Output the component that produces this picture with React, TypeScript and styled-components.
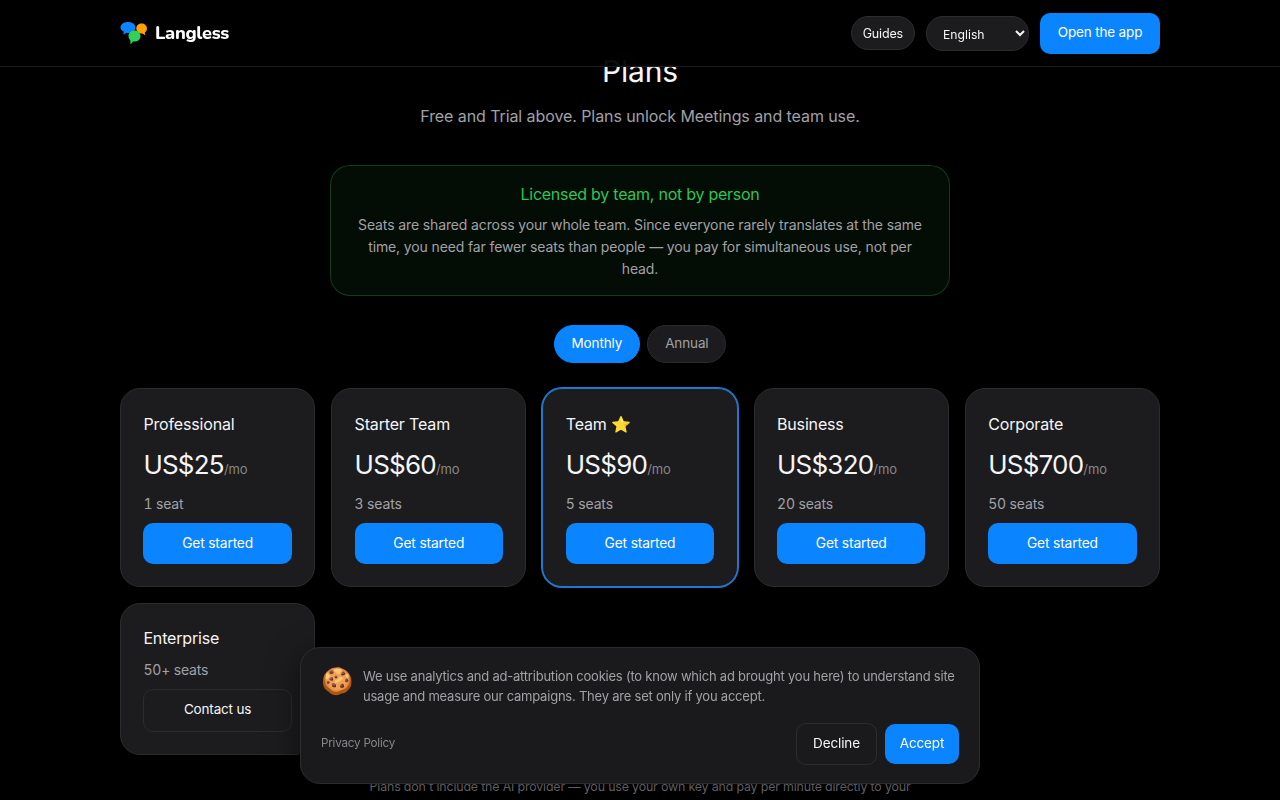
import React from "react";
import styled, { createGlobalStyle } from "styled-components";

const Global = createGlobalStyle`
  html, body { margin: 0; padding: 0; height: 800px; overflow: hidden; background: #000; }
  body { font-family: Inter, "Liberation Sans", sans-serif; color: #f5f5f7; letter-spacing: -0.01em; }
  * { box-sizing: border-box; }
`;

const Header = styled.header`
  position: fixed; top: 0; left: 0; right: 0; height: 67px; z-index: 10;
  background: rgba(0,0,0,0.88); backdrop-filter: blur(20px);
  border-bottom: 1px solid #1c1c1e;
  display: flex; justify-content: center;
`;
const HeaderInner = styled.div`
  width: 1040px; display: flex; align-items: center; justify-content: space-between;
`;
const Brand = styled.div`
  display: flex; align-items: center; gap: 6px;
  font: 800 18.2px Nunito, "Noto Sans", Lato, sans-serif; color: #fff; letter-spacing: -0.3px;
`;
const BrandName = styled.span`margin-top: -1px;`;
const Nav = styled.nav`display: flex; align-items: center; gap: 11px;`;
const GuidesLink = styled.a`
  height: 34px; padding: 0 11px; border-radius: 17px; background: #1c1c1e; border: 1px solid #2c2c2e;
  font-size: 12.5px; color: #f5f5f7; display: flex; align-items: center;
`;
const LangSelect = styled.select`
  height: 35px; width: 103px; padding: 2px 0 0 12px; border-radius: 17px; background: #1c1c1e; border: 1px solid #2c2c2e;
  font: 12.2px Inter, sans-serif; color: #f5f5f7;
`;
const OpenApp = styled.a`
  height: 41px; width: 120px; border-radius: 10px; background: #0a84ff; color: #fff;
  font-size: 13.5px; font-weight: 400; display: flex; align-items: center; justify-content: center; padding-bottom: 3px;
`;

const Main = styled.main`
  display: flex; flex-direction: column; align-items: center; padding-top: 52px; width: 1040px; margin: 0 auto;
`;
const Title = styled.h1`
  margin: 0; font-size: 30px; line-height: 39px; font-weight: 400; color: #f5f5f7;
`;
const Subtitle = styled.p`
  margin: 13px 0 0; font-size: 16px; line-height: 24px; color: #a1a1a6; letter-spacing: -0.005em;
`;
const Notice = styled.section`
  margin-top: 37px; width: 620px; height: 131px; padding: 17px 24px 0; text-align: center;
  border-radius: 20px; background: rgba(48,209,88,0.06); border: 1px solid rgba(48,209,88,0.25);
`;
const NoticeTitle = styled.div`font-size: 16px; line-height: 22px; color: #30c452; font-weight: 400; letter-spacing: -0.016em;`;
const NoticeText = styled.p`margin: 9px 0 0; font-size: 14px; line-height: 22px; color: #a1a1a6; letter-spacing: -0.009em;`;
const Toggle = styled.div`display: flex; gap: 7px; margin-top: 29px;`;
const ToggleButton = styled.button<{ $active?: boolean }>`
  height: 38px; padding: 0 17px 2px; border-radius: 19px; font: 400 13.5px Inter, sans-serif; letter-spacing: -0.01em;
  background: ${p => (p.$active ? "#0a84ff" : "#1c1c1e")};
  color: ${p => (p.$active ? "#fff" : "#a1a1a6")};
  border: 1px solid ${p => (p.$active ? "#0a84ff" : "#2c2c2e")};
`;
const Grid = styled.div`
  margin-top: 25px; width: 1040px; display: grid; grid-template-columns: repeat(5, 1fr); gap: 16px;
`;
const Card = styled.article<{ $featured?: boolean }>`
  background: #1c1c1e; border-radius: 20px; padding: 22px 22.4px;
  border: 1px solid ${p => (p.$featured ? "#1f78d1" : "#2c2c2e")};
  box-shadow: ${p => (p.$featured ? "0 0 0 1px #1f78d1" : "none")};
  display: flex; flex-direction: column; height: 199px;
`;
const EnterpriseCard = styled(Card)`height: 152px; padding-top: 21px;`;
const PlanName = styled.h3`margin: 0; font-size: 16px; line-height: 26px; font-weight: 400; color: #f5f5f7;`;
const Price = styled.div`margin-top: 11px; font-size: 26px; line-height: 34px; font-weight: 400; color: #f5f5f7; letter-spacing: -0.03em; display: flex; align-items: baseline;`;
const Per = styled.span`font-size: 13px; color: #86868b; letter-spacing: -0.01em;`;
const Seats = styled.div<{ $tight?: boolean }>`
  margin-top: ${p => (p.$tight ? "9px" : "8px")}; font-size: 14px; line-height: 20px; color: #a1a1a6;
  font-variant-numeric: tabular-nums;
`;
const CardButton = styled.a`
  margin-top: 9px; height: 41px; padding-bottom: 1px; border-radius: 10px; background: #0a84ff; color: #fff;
  font-size: 13.8px; font-weight: 400; display: flex; align-items: center; justify-content: center;
`;
const ContactButton = styled.a`
  margin-top: 9px; height: 43px; padding-bottom: 3px; border-radius: 10px; background: #1c1c1e; color: #f5f5f7; border: 1px solid #2c2c2e;
  font-size: 13.5px; font-weight: 400; display: flex; align-items: center; justify-content: center;
`;
const FootNote = styled.p`
  margin: 22px 0 0; width: 560px; text-align: center; font-size: 12.4px; line-height: 20px; color: #86868b;
`;

const Cookie = styled.aside`
  position: fixed; left: 300px; bottom: 16px; width: 680px; height: 137px; z-index: 20;
  background: #1a1a1c; border: 1px solid #2c2c2e; border-radius: 20px; padding: 18px 20px 18px;
  display: flex; flex-direction: column; justify-content: space-between;
  box-shadow: 0 8px 32px rgba(0,0,0,0.5);
`;
const CookieTop = styled.div`display: flex; gap: 12px;`;
const CookieEmoji = styled.span`font-size: 26px; line-height: 30px; width: 31px; flex: none; font-family: "Noto Color Emoji", sans-serif; margin-left: -1px; padding-left: 1px;`;
const CookieText = styled.p`margin: 0; font-size: 13px; line-height: 20px; color: #a1a1a6; letter-spacing: -0.017em;`;
const CookieBottom = styled.div`display: flex; justify-content: space-between; align-items: center;`;
const PrivacyLink = styled.a`font-size: 11.7px; line-height: 18px; color: #86868b; letter-spacing: -0.02em; margin-bottom: 2px;`;
const CookieActions = styled.div`display: flex; gap: 8px; align-items: center;`;
const Decline = styled.button`
  height: 42px; width: 81px; padding: 0 0 3px; border-radius: 10px; background: transparent; border: 1px solid #2c2c2e;
  font: 400 13.5px Inter, sans-serif; color: #f5f5f7; letter-spacing: -0.01em;
`;
const Accept = styled.button`
  height: 40px; width: 74px; padding: 0 0 3px; border-radius: 10px; background: #0a84ff; border: 0;
  font: 400 13.5px Inter, sans-serif; color: #fff; letter-spacing: -0.01em;
`;

const Logo = () => (
  <svg width="29" height="24" viewBox="0 0 29 24">
    <path d="M8 1c4.300 0 7.500 2.300 7.500 5.600S12.300 12 8.500 12c-.8 0-1.500-.1-2.200-.3L3.500 14l.2-3.400C1.600 9.500.5 8.100.5 6.400.5 3.200 3.700 1 8 1z" fill="#0a84ff" />
    <path d="M21.500 2.500c3 0 5.500 2.100 5.500 5 0 1.700-.8 3.100-2.100 4l.1 2.700-2.700-1.800c-3.300.2-6-2.100-6-5 0-2.800 2.300-4.900 5.200-4.900z" fill="#ff9f0a" />
    <path d="M14.500 9.500c3.400 0 6 2.400 6 5.500s-2.600 5.600-6 5.600c-.5 0-1 0-1.400-.2L10.500 23.500l-.2-4.300C9 18.200 8.500 16.700 8.500 15c0-3.100 2.600-5.500 6-5.500z" fill="#30d158" />
  </svg>
);

const plans = [
  { name: "Professional", price: "US$25", seats: "1 seat" },
  { name: "Starter Team", price: "US$60", seats: "3 seats" },
  { name: "Team ⭐", price: "US$90", seats: "5 seats", featured: true },
  { name: "Business", price: "US$320", seats: "20 seats" },
  { name: "Corporate", price: "US$700", seats: "50 seats" },
];

export default function App() {
  return (
    <>
      <Global />
      <Header>
        <HeaderInner>
          <Brand><Logo /><BrandName>Langless</BrandName></Brand>
          <Nav>
            <GuidesLink>Guides</GuidesLink>
            <LangSelect defaultValue="en"><option value="en">English</option></LangSelect>
            <OpenApp>Open the app</OpenApp>
          </Nav>
        </HeaderInner>
      </Header>
      <Main>
        <Title>Plans</Title>
        <Subtitle>Free and Trial above. Plans unlock Meetings and team use.</Subtitle>
        <Notice>
          <NoticeTitle>Licensed by team, not by person</NoticeTitle>
          <NoticeText>Seats are shared across your whole team. Since everyone rarely translates at the same time, you need far fewer seats than people — you pay for simultaneous use, not per head.</NoticeText>
        </Notice>
        <Toggle>
          <ToggleButton $active>Monthly</ToggleButton>
          <ToggleButton>Annual</ToggleButton>
        </Toggle>
        <Grid>
          {plans.map(p => (
            <Card key={p.name} $featured={p.featured}>
              <PlanName>{p.name}</PlanName>
              <Price>{p.price}<Per>/mo</Per></Price>
              <Seats>{p.seats}</Seats>
              <CardButton>Get started</CardButton>
            </Card>
          ))}
          <EnterpriseCard>
            <PlanName>Enterprise</PlanName>
            <Seats $tight>50+ seats</Seats>
            <ContactButton>Contact us</ContactButton>
          </EnterpriseCard>
        </Grid>
        <FootNote>Plans don't include the AI provider — you use your own key and pay per minute directly to your</FootNote>
      </Main>
      <Cookie>
        <CookieTop>
          <CookieEmoji>🍪</CookieEmoji>
          <CookieText>We use analytics and ad-attribution cookies (to know which ad brought you here) to understand site usage and measure our campaigns. They are set only if you accept.</CookieText>
        </CookieTop>
        <CookieBottom>
          <PrivacyLink>Privacy Policy</PrivacyLink>
          <CookieActions>
            <Decline>Decline</Decline>
            <Accept>Accept</Accept>
          </CookieActions>
        </CookieBottom>
      </Cookie>
    </>
  );
}
